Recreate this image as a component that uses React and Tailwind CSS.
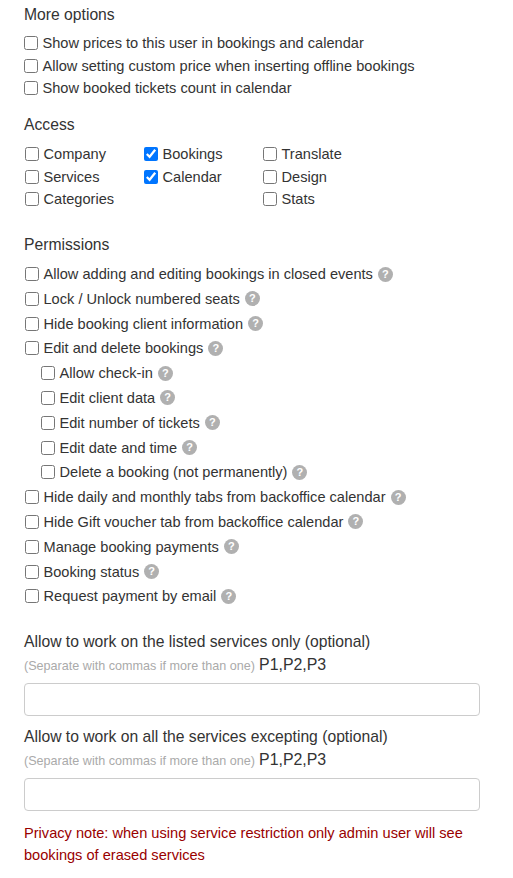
import React from "react";

const moreOptions = [
  "Show prices to this user in bookings and calendar",
  "Allow setting custom price when inserting offline bookings",
  "Show booked tickets count in calendar",
];

const access = [
  ["Company", false],
  ["Bookings", true],
  ["Translate", false],
  ["Services", false],
  ["Calendar", true],
  ["Design", false],
  ["Categories", false],
  null,
  ["Stats", false],
];

const permissions = [
  ["Allow adding and editing bookings in closed events", 0],
  ["Lock / Unlock numbered seats", 0],
  ["Hide booking client information", 0],
  ["Edit and delete bookings", 0],
  ["Allow check-in", 1],
  ["Edit client data", 1],
  ["Edit number of tickets", 1],
  ["Edit date and time", 1],
  ["Delete a booking (not permanently)", 1],
  ["Hide daily and monthly tabs from backoffice calendar", 0],
  ["Hide Gift voucher tab from backoffice calendar", 0],
  ["Manage booking payments", 0],
  ["Booking status", 0],
  ["Request payment by email", 0],
];

const Check = ({ label, checked }) => (
  <label className="flex items-center gap-[4.5px]">
    <input type="checkbox" defaultChecked={checked} className="m-0 w-[14px] h-[14px]" />
    <span>{label}</span>
  </label>
);

const Help = () => (
  <span className="ml-[5px] flex items-center justify-center w-[15px] h-[15px] rounded-full bg-[#b0b0b0] text-white text-[11px] font-bold leading-none">
    ?
  </span>
);

const ServiceField = ({ title }) => (
  <div>
    <div className="text-[15.7px] leading-[20px] text-[#333]">{title}</div>
    <div className="mt-[2.5px] leading-[20px]">
      <span className="text-[12.6px] text-[#aaa]">(Separate with commas if more than one)</span>{" "}
      <span className="text-[15.9px] text-[#333]">P1,P2,P3</span>
    </div>
    <input type="text" className="mt-[7.5px] block w-full h-[33px] border border-[#ccc] rounded bg-white" />
  </div>
);

export default function App() {
  return (
    <div className="w-[513px] h-[878px] overflow-hidden bg-white pl-6 pr-[33px] pt-[5px] text-[14.6px] text-[#333] font-['Liberation_Sans',Arial,sans-serif]">
      <h3 className="text-[15.7px] leading-[20px]">More options</h3>
      <div className="mt-[8px] flex flex-col gap-[2.5px] leading-[20px]">
        {moreOptions.map((label) => (
          <Check key={label} label={label} />
        ))}
      </div>

      <h3 className="mt-[17px] text-[15.7px] leading-[20px]">Access</h3>
      <div className="mt-[9px] pl-px grid grid-cols-[119px_119px_120px] gap-y-[2.5px] leading-[20px]">
        {access.map((item, i) =>
          item ? <Check key={item[0]} label={item[0]} checked={item[1]} /> : <div key={i} />
        )}
      </div>

      <h3 className="mt-[26px] text-[15.7px] leading-[20px]">Permissions</h3>
      <div className="mt-[9px] flex flex-col gap-[4.8px] leading-[20px]">
        {permissions.map(([label, nested]) => (
          <div key={label} className={nested ? "flex items-center pl-[17px]" : "flex items-center pl-px"}>
            <Check label={label} />
            <Help />
          </div>
        ))}
      </div>

      <div className="mt-[26px] flex flex-col gap-[11px]">
        <ServiceField title="Allow to work on the listed services only (optional)" />
        <ServiceField title="Allow to work on all the services excepting (optional)" />
      </div>

      <p className="mt-[10.5px] leading-[22px] text-[#990000]">
        Privacy note: when using service restriction only admin user will see bookings of erased services
      </p>
    </div>
  );
}
